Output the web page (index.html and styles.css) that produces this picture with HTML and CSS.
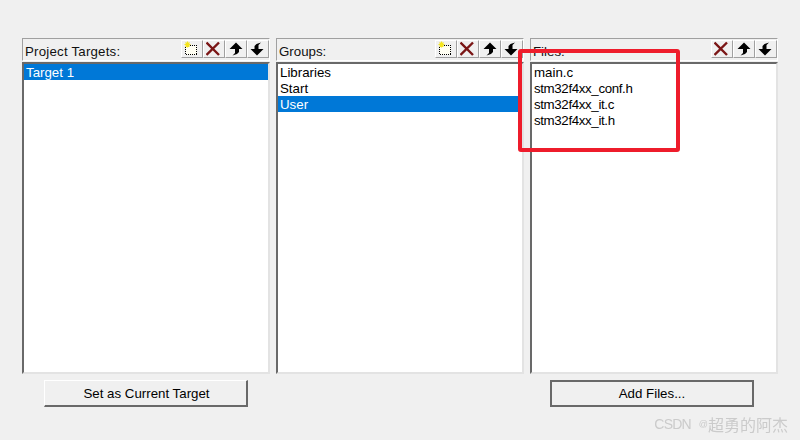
FILE: index.html
```html
<!DOCTYPE html>
<html lang="en">
<head>
<meta charset="utf-8">
<title>Manage Project Items</title>
<link rel="stylesheet" href="styles.css">
</head>
<body>
<main class="dialog">
  <section class="panel">
    <header class="head">
      <span class="label label-wide">Project Targets:</span>
      <div class="tools">
        <button class="tool"><svg width="16" height="16" viewBox="0 0 16 16"><use href="#i-new"/></svg></button>
        <button class="tool"><svg width="16" height="16" viewBox="0 0 16 16"><use href="#i-del"/></svg></button>
        <button class="tool"><svg width="16" height="16" viewBox="0 0 16 16"><use href="#i-up"/></svg></button>
        <button class="tool"><svg width="16" height="16" viewBox="0 0 16 16"><use href="#i-down"/></svg></button>
      </div>
    </header>
    <ul class="list">
      <li class="item selected">Target 1</li>
    </ul>
    <div class="action action-target"><button class="btn btn-target">Set as Current Target</button></div>
  </section>
  <section class="panel">
    <header class="head">
      <span class="label">Groups:</span>
      <div class="tools">
        <button class="tool"><svg width="16" height="16" viewBox="0 0 16 16"><use href="#i-new"/></svg></button>
        <button class="tool"><svg width="16" height="16" viewBox="0 0 16 16"><use href="#i-del"/></svg></button>
        <button class="tool"><svg width="16" height="16" viewBox="0 0 16 16"><use href="#i-up"/></svg></button>
        <button class="tool"><svg width="16" height="16" viewBox="0 0 16 16"><use href="#i-down"/></svg></button>
      </div>
    </header>
    <ul class="list">
      <li class="item">Libraries</li>
      <li class="item">Start</li>
      <li class="item selected">User</li>
    </ul>
  </section>
  <section class="panel">
    <header class="head">
      <span class="label">Files:</span>
      <div class="tools">
        <button class="tool"><svg width="16" height="16" viewBox="0 0 16 16"><use href="#i-del"/></svg></button>
        <button class="tool"><svg width="16" height="16" viewBox="0 0 16 16"><use href="#i-up"/></svg></button>
        <button class="tool"><svg width="16" height="16" viewBox="0 0 16 16"><use href="#i-down"/></svg></button>
      </div>
    </header>
    <ul class="list">
      <li class="item">main.c</li>
      <li class="item tight">stm32f4xx_conf.h</li>
      <li class="item tight">stm32f4xx_it.c</li>
      <li class="item tight">stm32f4xx_it.h</li>
    </ul>
    <div class="action action-files"><button class="btn btn-files">Add Files...</button></div>
  </section>
</main>
<div class="highlight"></div>
<div class="watermark"><span class="wm-csdn">CSDN</span><span class="wm-at">@</span><span class="wm-name">超勇的阿杰</span></div>
<svg class="defs" width="0" height="0" aria-hidden="true">
  <defs>
    <g id="i-new">
      <path d="M1.500 4.500h11v9h-11z" fill="#fffef2" stroke="#000" stroke-dasharray="1 1" shape-rendering="crispEdges"/>
      <path d="M3.500 .5v6M.5 3.500h6M1.500 1.500l4 4M5.500 1.500l-4 4" stroke="#f4e41f" stroke-width="1.200" fill="none"/>
    </g>
    <g id="i-del">
      <path d="M.5 1.500L13 14M13 1.500L.5 14" stroke="#7b1616" stroke-width="2.400" fill="none"/>
    </g>
    <g id="i-up">
      <path d="M8 1.500l6.500 6.500h-3.500v3l-2 2-4.500 1.500 2.500-2.500V8H1.500z" fill="#000"/>
    </g>
    <g id="i-down">
      <path d="M7 14.500L.5 8H4.500V5l2-2L11 1.500 8.500 4v4h5z" fill="#000"/>
    </g>
  </defs>
</svg>
</body>
</html>
```

FILE: styles.css
```css
* { box-sizing: border-box; }
html, body { margin: 0; height: 100%; }
body {
  width: 800px;
  height: 440px;
  overflow: hidden;
  background: #f0f0f0;
  font-family: "Liberation Sans", Arial, sans-serif;
  font-size: 13.3px;
  color: #000;
  position: relative;
}
.dialog {
  display: grid;
  grid-template-columns: repeat(3, 248px);
  column-gap: 6px;
  padding: 38px 0 0 22px;
}
.panel { display: flex; flex-direction: column; }
.head {
  height: 23px;
  display: flex;
  justify-content: space-between;
  padding: 1px 0 0 2px;
  border-top: 1px solid #a0a0a0;
  border-left: 1px solid #a0a0a0;
  border-right: 1px solid #fff;
  border-bottom: 1px solid #fff;
}
.label { line-height: 21px; padding-top: 1px; color: #101010; }
.label-wide { letter-spacing: 0.2px; }
.tools { display: flex; align-items: flex-start; }
.tool {
  width: 22px;
  height: 18px;
  padding: 0 0 0 2px;
  display: flex;
  align-items: center;
  justify-content: flex-start;
  background: #f0f0f0;
  border: 1px solid;
  border-color: #fff #a0a0a0 #a0a0a0 #fff;
}
.tool svg { display: block; }
.list {
  list-style: none;
  margin: 1px 0 0;
  padding: 0;
  height: 312px;
  background: #fff;
  border-top: 2px solid #696969;
  border-left: 2px solid #696969;
  border-right: 2px solid #e3e3e3;
  border-bottom: 2px solid #e3e3e3;
}
.item {
  height: 16px;
  line-height: 18px;
  padding-left: 2px;
  white-space: nowrap;
  overflow: hidden;
}
.tight { letter-spacing: -0.36px; }
.selected { background: #0078d7; color: #fff; }
.action {
  display: flex;
  padding-top: 6px;
}
.action-target { padding-left: 22px; }
.action-files { padding-left: 20px; }
.btn {
  width: 204px;
  height: 27px;
  padding: 0;
  background: #f0f0f0;
  font: inherit;
  color: #000;
  border: 1px solid;
  border-color: #fff #696969 #696969 #fff;
  border-bottom-width: 2px;
  border-right-width: 2px;
}
.btn-target { padding-left: 2px; }
.btn-files { border: 2px solid #696969; }
.highlight {
  position: absolute;
  left: 518px;
  top: 49px;
  width: 162px;
  height: 103px;
  border: 4px solid #ee1c2b;
  border-radius: 3px;
}
.watermark {
  position: absolute;
  right: 12px;
  top: 414px;
  display: flex;
  align-items: center;
  color: #cbcbcb;
  line-height: 20px;
  white-space: nowrap;
  filter: blur(0.35px);
}
.wm-csdn { font-size: 14px; letter-spacing: -0.8px; margin-right: 8px; }
.wm-at { font-size: 9px; }
.wm-name { font-family: "Noto Sans CJK SC", sans-serif; font-size: 16px; }
.defs { position: absolute; }
```
